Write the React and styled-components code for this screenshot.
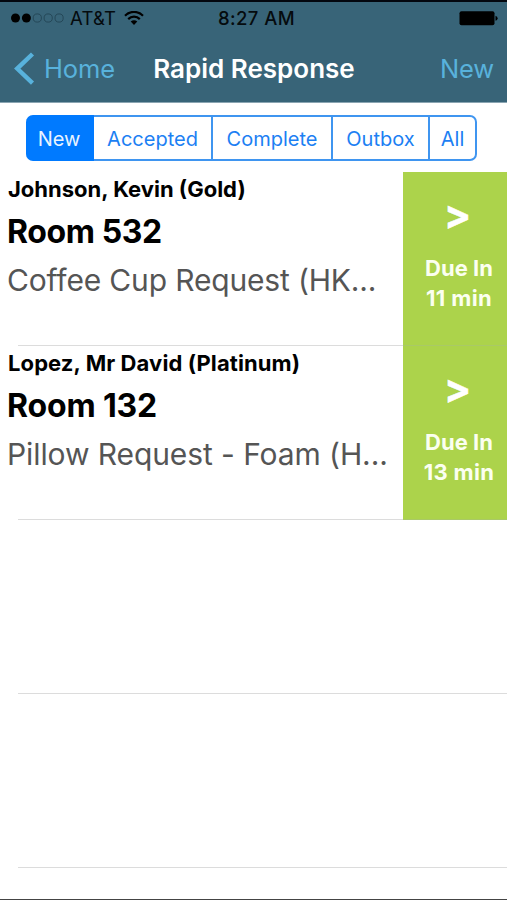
import React from 'react'
import styled, { createGlobalStyle } from 'styled-components'

const GlobalStyle = createGlobalStyle`
  * {
    box-sizing: border-box;
  }
  body {
    margin: 0;
    background: #fff;
    font-family: Inter, "Liberation Sans", sans-serif;
  }
`;

const Screen = styled.div`
  display: flex;
  flex-direction: column;
  width: 507px;
  height: 900px;
  overflow: hidden;
  background: #fff;
  border-bottom: 1px solid #444;
`;
const Header = styled.header`
  height: 103px;
  flex: none;
  background: #386478;
  border-top: 2px solid #03070f;
  border-bottom: 1px solid #8aa5b2;
`;
const StatusBar = styled.div`
  display: grid;
  grid-template-columns: 1fr auto 1fr;
  align-items: center;
  height: 33px;
  padding: 0 9px 0 10px;
  color: #050b0e;
  font-size: 18.5px;
  line-height: 33px;
`;
const Carrier = styled.div`
  display: flex;
  align-items: center;
  & span {
    margin: 0 8px 0 5px;
    letter-spacing: 0.2px;
  }
`;
const Clock = styled.div`
  padding-left: 5px;
  font-weight: 500;
  letter-spacing: 0.4px;
`;
const Battery = styled.svg`
  justify-self: end;
`;
const NavBar = styled.nav`
  display: grid;
  grid-template-columns: 1fr auto 1fr;
  align-items: center;
  height: 67px;
  padding: 0 13px;
`;
const NavLink = styled.a`
  display: flex;
  align-items: center;
  gap: 9px;
  justify-self: ${props => (props.$right ? 'end' : 'start')};
  color: #58b2dc;
  font-size: 25.5px;
  letter-spacing: -0.15px;
`;
const Title = styled.h1`
  margin: 0;
  padding-left: 1px;
  color: #fff;
  font-size: 26px;
  font-weight: 600;
  letter-spacing: 0;
`;
const Filters = styled.div`
  display: flex;
  flex: none;
  width: 451px;
  height: 46px;
  margin: 12px 0 11px 26px;
`;
const Filter = styled.button`
  width: ${props => props.$width}px;
  padding: 1px 0 0;
  border: 2px solid #3f95f0;
  border-left: 0;
  background: #fff;
  color: #1c80f3;
  font-family: inherit;
  font-size: 20px;
  &:first-child {
    border-radius: 7px 0 0 7px;
  }
  &:last-child {
    border-radius: 0 7px 7px 0;
  }
  ${props => props.$active && `
    border-color: #007aff;
    background: #007aff;
    color: #e8f3ff;
  `}
`;
const Row = styled.div`
  display: flex;
  justify-content: space-between;
  flex: none;
  height: 174px;
  background: linear-gradient(#dcdcdc, #dcdcdc) 18px 173px / 489px 1px no-repeat;
`;
const Details = styled.div`
  padding-left: 7px;
  white-space: nowrap;
`;
const Guest = styled.div`
  height: 33px;
  padding-left: 1px;
  line-height: 34px;
  color: #000;
  font-size: 22px;
  font-weight: 700;
  letter-spacing: ${props => props.$spacing};
`;
const Room = styled.div`
  height: 52px;
  line-height: 54px;
  color: #000;
  font-size: 32px;
  font-weight: 700;
  letter-spacing: ${props => props.$spacing};
`;
const Request = styled.div`
  line-height: 46px;
  color: #555;
  font-size: 30px;
  letter-spacing: ${props => props.$spacing};
`;
const Due = styled.div`
  display: flex;
  flex-direction: column;
  align-items: center;
  flex: none;
  width: 104px;
  padding: 21px 0 0 8px;
  background: #acd34b;
  border-bottom: 1px solid #a9c966;
  color: #fbfff0;
  font-size: 22px;
  font-weight: 700;
  line-height: 30px;
`;
const Arrow = styled.div`
  height: 60px;
  margin-left: -3px;
  color: #fff;
  font-size: 40px;
  line-height: 44px;
  -webkit-text-stroke: 0.5px #fff;
`;
const Minutes = styled.div`
  letter-spacing: 0.35px;
`;

const filters = [
  { label: 'New', width: 68 },
  { label: 'Accepted', width: 119 },
  { label: 'Complete', width: 120 },
  { label: 'Outbox', width: 97 },
  { label: 'All', width: 47 },
]

const requests = [
  {
    guest: 'Johnson, Kevin (Gold)',
    room: 'Room 532',
    request: 'Coffee Cup Request (HK...',
    due: '11 min',
    spacing: ['0', '-0.4px', '-0.16px'],
  },
  {
    guest: 'Lopez, Mr David (Platinum)',
    room: 'Room 132',
    request: 'Pillow Request - Foam (H...',
    due: '13 min',
    spacing: ['0.1px', '-0.15px', '-0.09px'],
  },
]

const Signal = () => (
  <svg width="55" height="12" viewBox="0 0 55 12">
    {[0, 1, 2, 3, 4].map(i => (
      <circle
        key={i}
        cx={5.5 + i * 10.9}
        cy="5"
        r={i < 2 ? 4.5 : 4.1}
        fill={i < 2 ? '#000' : 'none'}
        stroke={i < 2 ? 'none' : '#234453'}
        strokeWidth="0.9"
      />
    ))}
  </svg>
)

const Wifi = () => (
  <svg width="20" height="15" viewBox="0 0 20 15" fill="none" stroke="#000" strokeWidth="2.2">
    <path d="M1 4.8C6-.4 14-.4 19 4.8" />
    <path d="M4.2 8.1C7.4 4.9 12.6 4.9 15.8 8.1" />
    <path d="M10 13.9 6.7 10.6Q10 7.8 13.3 10.6Z" fill="#000" stroke="none" />
  </svg>
)

export default () => (
  <Screen>
    <GlobalStyle />
    <Header>
      <StatusBar>
        <Carrier>
          <Signal />
          <span>AT&amp;T</span>
          <Wifi />
        </Carrier>
        <Clock>8:27 AM</Clock>
        <Battery width="39" height="16" viewBox="0 0 39 16">
          <rect x="0.5" y="0.2" width="35" height="14" rx="2" />
          <path d="M36.5 4.7Q38.6 5.2 38.6 7.2T36.5 9.7Z" />
        </Battery>
      </StatusBar>
      <NavBar>
        <NavLink>
          <svg width="22" height="34" viewBox="0 0 22 34" fill="none" stroke="#58b2dc" strokeWidth="4.4">
            <path d="M19.5 2 4.2 16.6 19.5 31.2" />
          </svg>
          Home
        </NavLink>
        <Title>Rapid Response</Title>
        <NavLink $right>New</NavLink>
      </NavBar>
    </Header>
    <Filters>
      {filters.map((filter, i) => (
        <Filter key={filter.label} $width={filter.width} $active={i === 0}>
          {filter.label}
        </Filter>
      ))}
    </Filters>
    {requests.map(item => (
      <Row key={item.room}>
        <Details>
          <Guest $spacing={item.spacing[0]}>{item.guest}</Guest>
          <Room $spacing={item.spacing[1]}>{item.room}</Room>
          <Request $spacing={item.spacing[2]}>{item.request}</Request>
        </Details>
        <Due>
          <Arrow>&gt;</Arrow>
          <div>Due In</div>
          <Minutes>{item.due}</Minutes>
        </Due>
      </Row>
    ))}
    <Row />
    <Row />
  </Screen>
)
